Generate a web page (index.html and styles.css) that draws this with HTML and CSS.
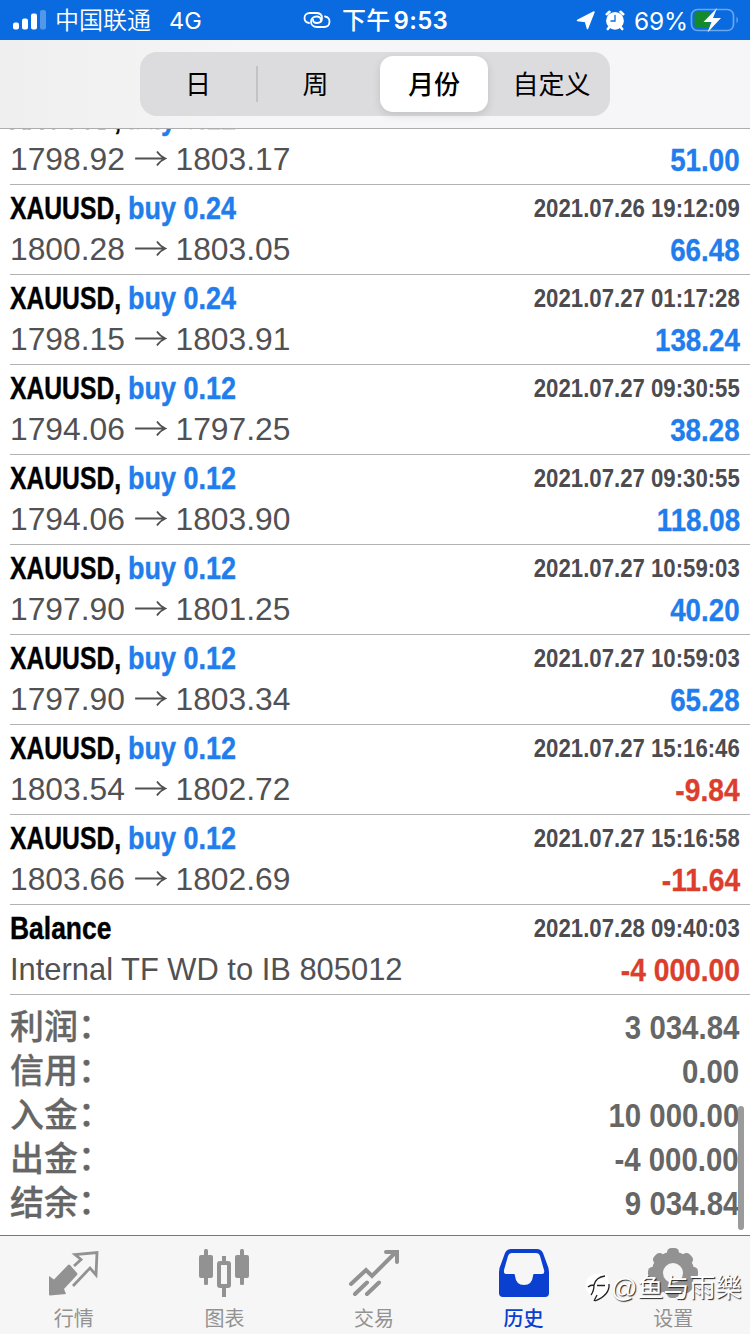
FILE: index.html
```html
<!DOCTYPE html>
<html lang="zh-CN">
<head>
<meta charset="utf-8">
<title>历史</title>
<link rel="stylesheet" href="styles.css">
</head>
<body>
<div class="phone">
  <header class="status">
    <div class="status-left">
      <svg class="signal" width="34" height="20" viewBox="0 0 34 20" fill="#fff"><rect x="1" y="12.5" width="6" height="7" rx="2"/><rect x="10" y="8.500" width="6" height="11" rx="2"/><rect x="19" y="3.500" width="6" height="16" rx="2"/><rect x="28" y="0" width="6" height="19.500" rx="2" opacity=".3"/></svg>
      <span class="carrier">中国联通</span><span class="network">4G</span>
    </div>
    <div class="status-mid">
      <svg width="28" height="18" viewBox="0 0 28 18" fill="none" stroke="#fff" stroke-width="1.800" stroke-linecap="round"><path d="M6 12C3 11.500 1.500 9.500 1.500 7C1.500 4 3.500 2 7 2H13C17 2 19 4 19 7S17 12 14 12C11 12 9.800 10.500 10 8.500"/><path d="M22 5.500C25 6 26.500 8 26.500 10.500C26.500 14 24.500 16 21 16H14C10 16 8 13.500 8 10.500S10.500 5.500 13.500 5.500C16.500 5.500 18 7 17.800 9"/></svg>
      <span class="clock"><span class="half">下午</span>9:53</span>
    </div>
    <div class="status-right">
      <svg width="20" height="20" viewBox="0 0 20 20" fill="#fff"><path d="M18 2 11.500 18.500 9.500 11.500 1.500 10.500z" stroke="#fff" stroke-width="1.500" stroke-linejoin="round"/></svg>
      <svg class="alarm" width="20" height="21" viewBox="0 0 20 21" fill="none" stroke="#fff" stroke-width="2.600" stroke-linecap="round"><circle cx="10" cy="10.800" r="8.900" fill="#fff" stroke="none"/><path d="M1.800 4.200 4.500 1.800M18.200 4.200 15.500 1.800M4 17.500 2.800 19M16 17.500 17.200 19"/><path d="M10 5.500v5.500H6" stroke="#0a6adf" stroke-width="1.300"/></svg>
      <span class="percent">69%</span>
      <svg class="battery" width="50" height="26" viewBox="0 0 50 26"><rect x="1.500" y="2.500" width="42" height="21" rx="6" fill="none" stroke="#6ba7ee" stroke-width="1.700"/><path d="M7 5H19V21H7Q4.500 21 4.500 18V8Q4.500 5 7 5" fill="#148a2c"/><path d="M46.500 9.500q3 3.500 0 7z" fill="#6ba7ee"/><path d="M27 1 13.500 15h8l-4 10.500 13.500-14.500h-8z" fill="#fff"/></svg>
    </div>
  </header>

  <nav class="filter">
    <div class="segments">
      <span class="segment">日</span>
      <span class="segment divided">周</span>
      <span class="segment active">月份</span>
      <span class="segment">自定义</span>
    </div>
  </nav>

  <main class="history" id="history"></main>

  <footer class="tabs">
    <div class="tab">
      <svg width="52" height="50" viewBox="0 0 52 50"><path d="M20 17 Q21 16 22 17L29 25Q30 26 29 27L16 41 18 46 2 47.500Q1 47.500 1 46V28L6 31.500z" fill="#929292"/><path d="M26 18 33 11.500 27 6.500 49 4.500 48 27 42 20 25 38" fill="none" stroke="#929292" stroke-width="2.800"/></svg>
      <span>行情</span>
    </div>
    <div class="tab">
      <svg width="52" height="50" viewBox="0 0 52 50" fill="#929292"><rect x="1" y="7" width="14" height="23" rx="2"/><rect x="6" y="1" width="4" height="36" rx="1.500"/><rect x="37" y="7" width="14" height="23" rx="2"/><rect x="42" y="1" width="4" height="36" rx="1.500"/><path d="M24 8h4v8h-4zM24 39h4v10h-4z"/><rect x="21" y="15" width="10" height="23" fill="none" stroke="#929292" stroke-width="4" rx="1"/></svg>
      <span>图表</span>
    </div>
    <div class="tab">
      <svg width="52" height="50" viewBox="0 0 52 50" fill="none" stroke="#929292" stroke-width="4"><path d="M3 36 18 22 24 28 47 5M38 4H49V14M7 46 19 34.500M19 46 31 34.500" stroke-linecap="round"/></svg>
      <span>交易</span>
    </div>
    <div class="tab current">
      <svg width="52" height="50" viewBox="0 0 52 50"><path fill="#0b3fd0" fill-rule="evenodd" d="M13 1H39Q43 1 45 5L49 16Q51 20 51 25V45Q51 49 47 49H5Q1 49 1 45V25Q1 20 3 16L7 5Q9 1 13 1ZM14 5Q11 5 10 8L6 22Q5.500 26 8 26H16Q17 26 17 28Q18 37 26 37Q34 37 35 28Q35 26 36 26H44Q47 26 46 22L42 8Q41 5 38 5Z"/></svg>
      <span>历史</span>
    </div>
    <div class="tab">
      <svg width="52" height="50" viewBox="0 0 52 50"><g fill="#929292"><rect x="20" y="0" width="12" height="50" rx="4.500"/><rect x="20" y="0" width="12" height="50" rx="4.500" transform="rotate(45 26 25)"/><rect x="20" y="0" width="12" height="50" rx="4.500" transform="rotate(90 26 25)"/><rect x="20" y="0" width="12" height="50" rx="4.500" transform="rotate(135 26 25)"/><circle cx="26" cy="25" r="21.500"/></g><circle cx="26" cy="25" r="10" fill="#f6f6f6"/></svg>
      <span>设置</span>
    </div>
    <div class="watermark">
      <svg width="26" height="30" viewBox="0 0 26 30"><path d="M6 22C-1 19-1 7 5 3C11 0 20 0 23 4L24 12C24 19 18 24 10 28L12 23C9 24 6 23 6 22" fill="#fff"/><path d="M3 14Q5 12 9 12Q11 4 20 3M9 12Q9 18 6 22M12 12.500H20M24 11Q25 22 10 28M12 22 9 28" fill="none" stroke="#222" stroke-width="1.300"/></svg>
      <span>@鱼与雨樂</span>
    </div>
  </footer>
</div>
<script src="app.js"></script>
</body>
</html>
```
FILE: styles.css
```css
* { box-sizing: border-box; }
body { margin: 0; }
.phone {
  position: relative;
  width: 750px;
  height: 1334px;
  display: flex;
  flex-direction: column;
  overflow: hidden;
  background: #fff;
  font-family: "Liberation Sans", "Noto Sans CJK SC", sans-serif;
}

.status {
  flex: none;
  height: 40px;
  display: grid;
  grid-template-columns: 290px 220px 240px;
  align-items: center;
  background: #0a6adf;
  color: #fff;
  font-family: Inter, "Noto Sans CJK SC", sans-serif;
  font-size: 24px;
  line-height: 40px;
}
.status-left, .status-mid, .status-right { display: flex; align-items: center; height: 40px; }
.status-left { padding-left: 12px; }
.carrier { margin-left: 9px; padding-top: 1px; font-weight: 350; }
.network { margin-left: 18px; padding-top: 2px; font-size: 23.5px; }
.status-mid { padding-left: 13px; }
.clock { margin-left: 11px; padding-top: 2px; font-weight: 600; font-size: 24px; letter-spacing: .3px; white-space: nowrap; }
.half { margin-right: 3px; font-weight: 500; }
.status-right { padding-left: 66px; }
.alarm { margin-left: 9px; }
.percent { width: 53px; margin-left: 9px; padding-top: 2px; font-size: 24.5px; letter-spacing: -.2px; }
.battery { flex: none; margin-left: 3px; }

.filter {
  flex: none;
  height: 89px;
  padding-top: 12px;
  border-bottom: 1px solid #adadad;
  background: linear-gradient(90deg, #efefef 0, #f6f6f8 35%, #f6f6f8);
}
.segments {
  width: 470px;
  height: 64px;
  margin-left: 140px;
  padding: 4px 5px;
  display: grid;
  grid-template-columns: 111px 124px 108px 117px;
  border-radius: 17px;
  background: #dcdcde;
  font-size: 26px;
  line-height: 58px;
  text-align: center;
}
.segment:first-child { padding-right: 5px; }
.segment:nth-child(2) { height: 36px; margin: 10px 0; line-height: 38px; border-left: 2px solid #c3c3c5; padding-right: 7px; }
.segment:last-child { padding-left: 10px; }
.segment.active { height: 56px; border-radius: 13px; background: #fff; font-weight: 500; box-shadow: 0 3px 9px rgba(0, 0, 0, .12); }

.history {
  position: relative;
  flex: 1;
  min-height: 0;
  display: flex;
  flex-direction: column;
  justify-content: flex-end;
  overflow: hidden;
}
.deal {
  flex: none;
  height: 90px;
  margin-left: 10px;
  padding: 3px 10px 0 0;
  border-bottom: 1px solid #b2b2b2;
}
.line { display: flex; justify-content: space-between; white-space: nowrap; }
.heading { height: 41px; line-height: 42px; }
.detail { height: 41px; line-height: 42px; }
.title { display: flex; font-size: 31px; font-weight: 700; -webkit-text-stroke: .4px; }
.symbol { width: 118px; color: #000; transform: scaleX(.796); transform-origin: left; }
.symbol:only-child { transform: scaleX(.853); }
.side { color: #217dec; transform: scaleX(.87); transform-origin: left; }
.time { height: 40px; font-size: 25.5px; line-height: 40px; font-weight: 700; color: #4b4b50; transform: scaleX(.87); transform-origin: right; }
.prices { height: 40px; display: flex; align-items: center; line-height: 40px; font-size: 32px; color: #515154; transform: scaleX(.993); transform-origin: left; }
.prices.note { transform: scaleX(.965); }
.prices svg { margin: 0 9px 0 10px; }
.amount { padding-top: 1px; font-size: 31px; font-weight: 700; -webkit-text-stroke: .3px; transform: scaleX(.895); transform-origin: right; }
.loss { transform: scaleX(.91); }
.gain { color: #217dec; }
.loss { color: #dc3e2d; }

.summary { flex: none; height: 240px; padding: 10px 11px 0 10px; color: #666; font-weight: 700; }
.total { height: 44px; display: flex; justify-content: space-between; line-height: 44px; }
.total-name { display: flex; font-size: 34px; font-weight: 500; -webkit-text-stroke: .3px; }
.colon { margin: -1px 0 0; }
.total-value { font-size: 34px; transform: scaleX(.865); transform-origin: right; }
.scrollbar {
  position: absolute;
  right: 6px;
  bottom: 5px;
  width: 6px;
  height: 124px;
  border-radius: 3px;
  background: #9b9b9b;
}

.tabs {
  position: relative;
  flex: none;
  height: 99px;
  padding-right: 2px;
  display: grid;
  grid-template-columns: repeat(5, 1fr);
  border-top: 1px solid #777;
  background: #f6f6f6;
}
.tab { display: flex; flex-direction: column; align-items: center; padding-top: 12px; color: #929292; font-size: 20px; line-height: 28px; }
.tab:first-child { padding-right: 2px; }
.tab span { margin-top: 7px; }
.current { color: #0b3fd0; }
.tab.current span { font-weight: 500; }
.watermark {
  position: absolute;
  left: 585px;
  top: 36px;
  display: flex;
  align-items: center;
  color: #fff;
  font-size: 26px;
  line-height: 32px;
  white-space: nowrap;
  text-shadow: 1px 1px 1px #222;
}
```
FILE: app.js
```js
const deals = [
  ['0.12', '', '1798.92', '1803.17', '51.00'],
  ['0.24', '2021.07.26 19:12:09', '1800.28', '1803.05', '66.48'],
  ['0.24', '2021.07.27 01:17:28', '1798.15', '1803.91', '138.24'],
  ['0.12', '2021.07.27 09:30:55', '1794.06', '1797.25', '38.28'],
  ['0.12', '2021.07.27 09:30:55', '1794.06', '1803.90', '118.08'],
  ['0.12', '2021.07.27 10:59:03', '1797.90', '1801.25', '40.20'],
  ['0.12', '2021.07.27 10:59:03', '1797.90', '1803.34', '65.28'],
  ['0.12', '2021.07.27 15:16:46', '1803.54', '1802.72', '-9.84'],
  ['0.12', '2021.07.27 15:16:58', '1803.66', '1802.69', '-11.64'],
];
const totals = [
  ['利润', '3 034.84'],
  ['信用', '0.00'],
  ['入金', '10 000.00'],
  ['出金', '-4 000.00'],
  ['结余', '9 034.84'],
];

const arrow = '<svg width="32" height="20" viewBox="0 0 32 20" fill="none" stroke="#515154" stroke-width="1.800"><path d="M0 9.500H30M22 2.500Q25.500 7.500 30.500 9.500Q25.500 11.500 22 16.500"/></svg>';

const row = (title, time, detail, amount, kind = '') => `
  <section class="deal">
    <div class="line heading"><div class="title">${title}</div><div class="time">${time}</div></div>
    <div class="line detail"><div class="prices ${kind}">${detail}</div>
    <div class="amount ${amount.startsWith('-') ? 'loss' : 'gain'}">${amount}</div></div>
  </section>`;

document.getElementById('history').innerHTML =
  deals.map(([lots, time, open, close, profit]) =>
    row(`<span class="symbol">XAUUSD,</span><span class="side">buy ${lots}</span>`, time, `${open}${arrow}${close}`, profit)).join('') +
  row('<span class="symbol">Balance</span>', '2021.07.28 09:40:03', 'Internal TF WD to IB 805012', '-4 000.00', 'note') +
  '<section class="summary">' +
  totals.map(([name, value]) =>
    `<div class="total"><span class="total-name">${name}<span class="colon">：</span></span><span class="total-value">${value}</span></div>`).join('') +
  '</section><div class="scrollbar"></div>';
```
